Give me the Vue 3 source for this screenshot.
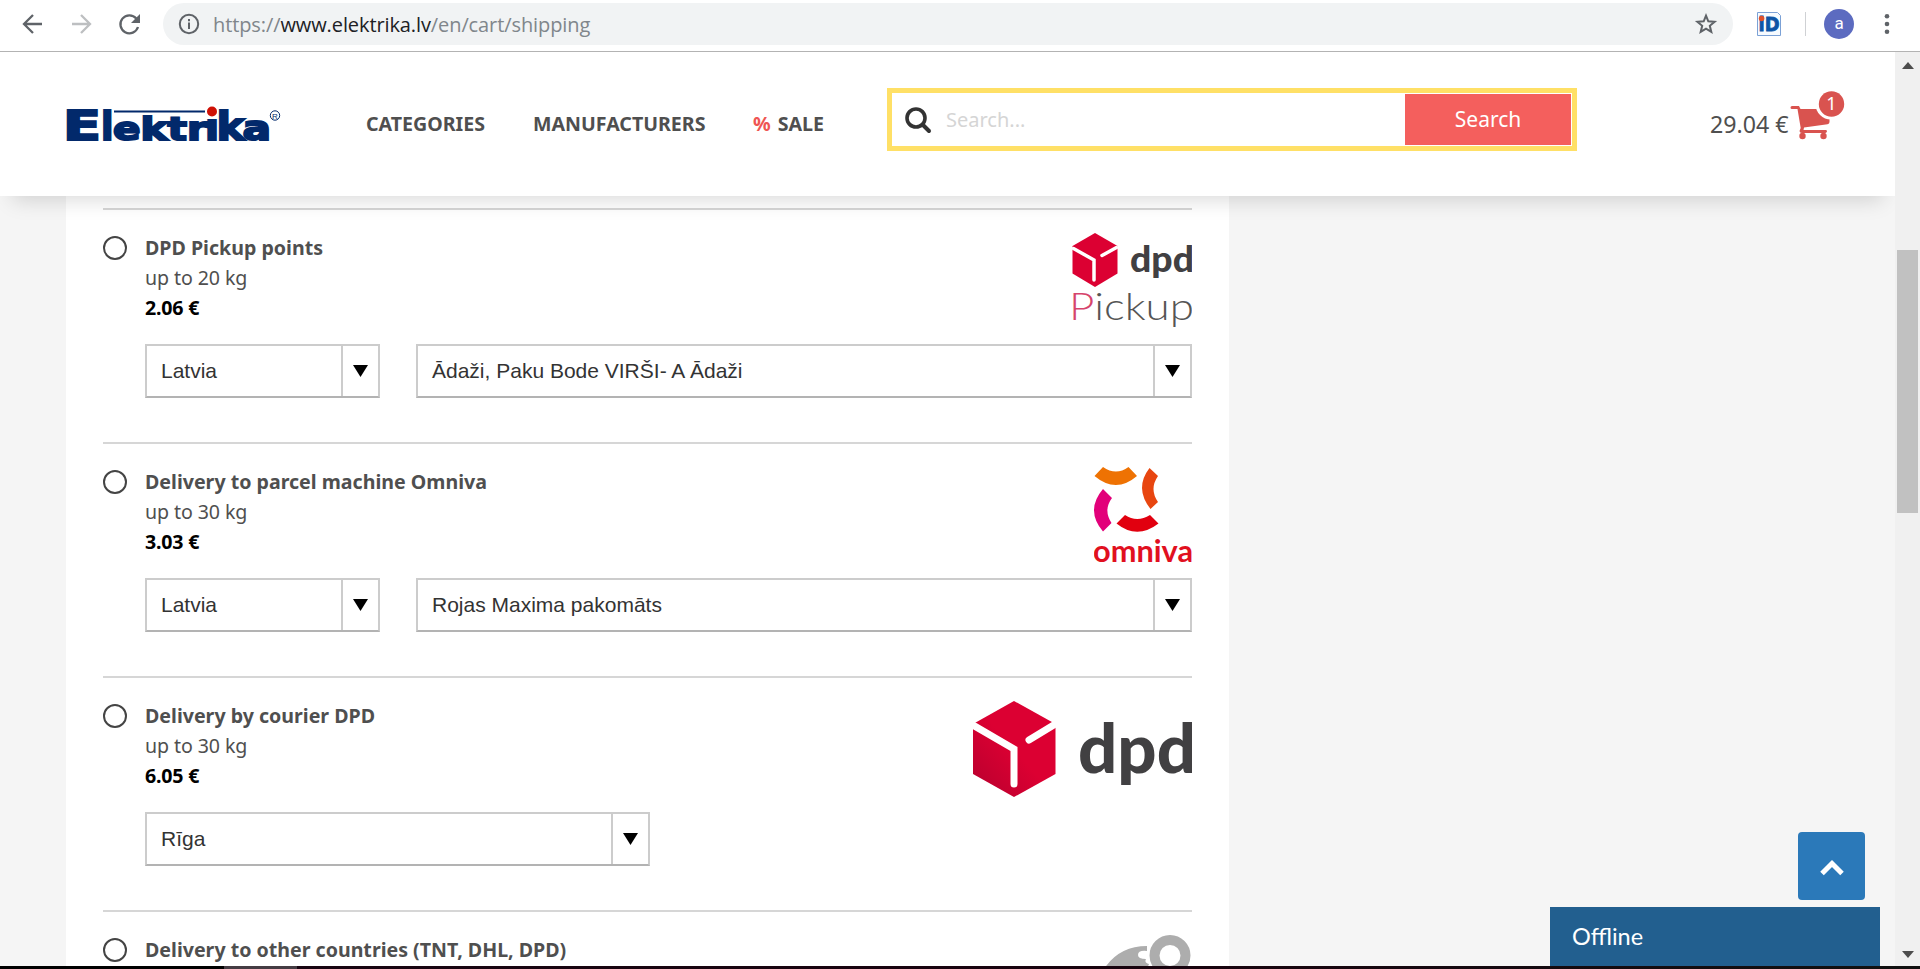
<script setup>
const methods = [
  { id: 'pickup', title: 'DPD Pickup points', limit: 'up to 20 kg', price: '2.06 €', selects: [{ v: 'Latvia', s: 'small' }, { v: 'Ādaži, Paku Bode VIRŠI- A Ādaži', s: 'large' }] },
  { id: 'omniva', title: 'Delivery to parcel machine Omniva', limit: 'up to 30 kg', price: '3.03 €', selects: [{ v: 'Latvia', s: 'small' }, { v: 'Rojas Maxima pakomāts', s: 'large' }] },
  { id: 'dpd', title: 'Delivery by courier DPD', limit: 'up to 30 kg', price: '6.05 €', selects: [{ v: 'Rīga', s: 'medium' }] },
  { id: 'other', title: 'Delivery to other countries (TNT, DHL, DPD)', limit: '', price: '', selects: [] },
]
</script>

<template>
  <div class="window">
    <div class="toolbar">
      <svg class="nav-icons" width="163" height="51" viewBox="0 0 163 51" fill="none" stroke="#5f6368" stroke-width="2.3">
        <path d="M42 24H25M33 15l-9 9 9 9" />
        <path d="M72 24h17M81 15l9 9-9 9" stroke="#bdbfc1" />
        <path d="M136.300 18.500A9 9 0 1 0 138 27" />
        <path d="M140 14v9h-9z" fill="#5f6368" stroke="none" />
      </svg>
      <div class="omnibox">
        <svg class="info" width="22" height="22" viewBox="0 0 22 22" fill="none" stroke="#5f6368" stroke-width="2">
          <circle cx="11" cy="11" r="9.200" /><path d="M11 9.500v6.500M11 6v2.200" />
        </svg>
        <span class="url">https://<b>www.elektrika.lv</b>/en/cart/shipping</span>
        <svg class="star" width="24" height="24" viewBox="0 0 24 24" fill="none" stroke="#5f6368" stroke-width="2">
          <path d="M12 3.600l2.300 5.700 6.300.500-4.800 4 1.500 6.100-5.300-3.300-5.300 3.300 1.500-6.100-4.800-4 6.300-.500z" />
        </svg>
      </div>
      <svg width="187" height="51" viewBox="0 0 187 51">
        <path d="M24.500 12.500h20l3 3v20h-23z" fill="#f7fbff" stroke="#7ba1d6" />
        <text x="25.500" y="31" class="idmark" textLength="21" lengthAdjust="spacingAndGlyphs">iD</text>
        <circle cx="28.600" cy="18.500" r="2.800" fill="#e0502a" />
        <path d="M72.500 12v24" stroke="#cfd1d4" />
        <circle cx="106" cy="24" r="15" fill="#5c6bc0" />
        <text x="106" y="28.500" class="avatar" text-anchor="middle">a</text>
        <g fill="#5f6368"><circle cx="154" cy="16.300" r="2.300" /><circle cx="154" cy="24" r="2.300" /><circle cx="154" cy="31.700" r="2.300" /></g>
      </svg>
    </div>

    <div class="viewport">
      <div class="page">
        <header class="header">
          <svg class="brand" width="216" height="36" viewBox="0 0 216 36">
            <g class="brand-text">
              <text x="-3" y="33.800" font-size="40" textLength="38" lengthAdjust="spacingAndGlyphs">E</text>
              <text x="35" y="33.800" font-size="38.500" textLength="12.500" lengthAdjust="spacingAndGlyphs">l</text>
              <text x="47" y="33.800" font-size="32.500" textLength="94" lengthAdjust="spacingAndGlyphs">ektr</text>
              <text x="139" y="33.800" font-size="35" textLength="14" lengthAdjust="spacingAndGlyphs">ı</text>
              <text x="150.500" y="33.800" font-size="38.500" textLength="28" lengthAdjust="spacingAndGlyphs">k</text>
              <text x="176.500" y="33.800" font-size="34" textLength="28.500" lengthAdjust="spacingAndGlyphs">a</text>
            </g>
            <path d="M48 5.500h91" stroke="#02296b" stroke-width="2.200" />
            <circle cx="146" cy="5.500" r="5" fill="#cf1005" />
            <circle cx="209" cy="9.500" r="4.700" fill="none" stroke="#02296b" />
            <text x="209" y="12.500" text-anchor="middle" class="reg">R</text>
          </svg>
          <nav class="nav">
            <span class="n1">CATEGORIES</span><span class="n2">MANUFACTURERS</span>
            <span class="n3"><i>%</i>SALE</span>
          </nav>
          <div class="search">
            <svg width="30" height="30" viewBox="0 0 30 30" fill="none" stroke="#333" stroke-linecap="round">
              <circle cx="12" cy="13" r="9" stroke-width="3.600" /><path d="M19 20l6 6" stroke-width="4" />
            </svg>
            <span class="placeholder">Search...</span>
            <span class="go">Search</span>
          </div>
          <div class="cart">
            <span class="total">29.04 €</span>
            <svg width="56" height="50" viewBox="0 0 56 50">
              <g fill="#d9534f">
                <path d="M2 15h7l1.500 3H39.500v13q0 2-2 2.300L14 36.500l-.500 2.500h22q1.500 0 1.500 1.300T35.500 42H12q-2.500 0-2.500-2l1.200-3L7.500 18H2q-1.500 0-1.500-1.500T2 15z" />
                <circle cx="12.500" cy="45" r="3.200" /><circle cx="33.500" cy="45" r="3.200" />
              </g>
              <circle cx="41" cy="13" r="15.500" fill="#fff" />
              <circle cx="41.500" cy="13" r="12.700" fill="#d9534f" />
              <text x="41.500" y="19" text-anchor="middle" class="count">1</text>
            </svg>
          </div>
        </header>

        <main class="panel">
          <section v-for="m in methods" :key="m.id" class="method">
            <span class="radio"></span>
            <div class="details">
              <div class="info-row">
                <div class="copy">
                  <div class="title">{{ m.title }}</div>
                  <div class="limit">{{ m.limit }}</div>
                  <div class="price">{{ m.price }}</div>
                </div>
                <svg v-if="m.id === 'pickup'" class="logo" width="120" height="96" viewBox="0 0 120 96">
                  <path d="M23 0L45.500 13v27.500L23 54 .500 40.500V13z" fill="#dc0032" />
                  <path d="M1.500 15.500L22 27v20M44.500 14.500L30 22.500" class="cut" stroke-width="3.500" />
                  <text x="58" y="38.500" font-size="36" textLength="64" lengthAdjust="spacingAndGlyphs" class="dpdtext">dpd</text>
                  <text x="-3" y="87" font-size="37" textLength="125" lengthAdjust="spacingAndGlyphs" class="pickup-text"><tspan fill="#d6446c">P</tspan>ickup</text>
                </svg>
                <svg v-else-if="m.id === 'omniva'" class="logo" width="98" height="96" viewBox="0 0 98 96">
                  <path d="M9 0Q22 9 34.500 0L43 9Q22 27 .500 9z" fill="#ee7203" />
                  <path d="M55.500 1L64 9Q55 22 64 35L56.500 42Q40 21 55.500 1z" fill="#e84610" />
                  <path d="M9 22L18 31Q9 43 17.500 56L9 64.500Q-9 43 9 22z" fill="#e2007a" />
                  <path d="M31 48Q43 56 56 48L64.500 56.500Q43 73 22.500 56.500z" fill="#e1000f" />
                  <text x="-1" y="95" textLength="100" lengthAdjust="spacingAndGlyphs" class="omni">omniva</text>
                </svg>
                <svg v-else-if="m.id === 'dpd'" class="logo" width="219" height="96" viewBox="0 0 219 96">
                  <defs><linearGradient id="cube" x1="0" y1="1" x2=".5" y2=".5"><stop offset="0" stop-color="#b6002e" /><stop offset="1" stop-color="#dc0032" /></linearGradient></defs>
                  <path d="M41 0L82.500 23v50L41 96 0 73V23z" fill="url(#cube)" />
                  <path d="M-2 23L41 48v35M84 22L56 39" class="cut" stroke-width="7" />
                  <text x="105" y="71.500" font-size="68" textLength="118" lengthAdjust="spacingAndGlyphs" class="dpdtext">dpd</text>
                </svg>
                <svg v-else class="logo" width="88" height="96" viewBox="0 0 88 96">
                  <path d="M0 34Q15 11 43 11v5q-9-1-9 4 0 4 8 4-2 4 3 5l-6 15H0z" fill="#adadad" />
                  <circle cx="66" cy="20.500" r="15.500" fill="none" stroke="#adadad" stroke-width="10" />
                </svg>
              </div>
              <div class="selects">
                <div v-for="s in m.selects" :key="s.v" class="select" :class="s.s">
                  <span>{{ s.v }}</span>
                  <div class="arrow"><svg width="15" height="12" viewBox="0 0 15 12"><path d="M0 0h15L7.500 12z" /></svg></div>
                </div>
              </div>
            </div>
          </section>
        </main>
      </div>
      <div class="scrollbar">
        <svg width="12" height="7" viewBox="0 0 12 7"><path d="M6 0l6 7H0z" fill="#4d4d4d" /></svg>
        <div class="thumb"></div>
        <svg width="12" height="7" viewBox="0 0 12 7"><path d="M6 7l6-7H0z" fill="#4d4d4d" /></svg>
      </div>
      <div class="to-top">
        <svg width="24" height="18" viewBox="0 0 24 18" fill="none" stroke="#fff" stroke-width="5"><path d="M2 14.500L12 4.500l10 10" /></svg>
      </div>
      <div class="chat">Offline</div>
    </div>
    <div class="taskbar"></div>
  </div>
</template>

<style>
body { margin: 0; overflow: hidden; }
</style>
<style scoped>
* { box-sizing: border-box; }
svg { display: block; flex: none; overflow: visible; }
.window { width: 1920px; height: 969px; display: flex; flex-direction: column; background: #fff; font-family: "Noto Sans", sans-serif; overflow: hidden; }
.toolbar { height: 52px; flex: none; display: flex; border-bottom: 1px solid #b3b3b3; }
.omnibox { width: 1570px; height: 42px; margin-top: 3px; border-radius: 21px; background: #f1f3f4; display: flex; align-items: center; padding: 0 15px 0 15px; }
.url { font-family: "Open Sans", sans-serif; font-size: 20px; color: #80868b; margin-left: 13px; line-height: 28px; padding-top: 1px; white-space: nowrap; letter-spacing: -.1px; }
.url b { font-weight: 400; color: #202124; }
.star { margin-left: auto; }
.idmark { font: 700 19px "DejaVu Sans", sans-serif; fill: #0d55a5; stroke: #0d55a5; stroke-width: .8px; }
.avatar { font: 17px Roboto, sans-serif; fill: #fff; }
.viewport { height: 914px; display: flex; position: relative; background: #f5f5f5; flex: none; overflow: hidden; }
.page { width: 1895px; overflow: hidden; }
.header { height: 144px; background: #fff; display: flex; position: relative; z-index: 1; box-shadow: 0 16px 20px -12px rgba(0, 0, 0, .15); }
.brand { margin: 54px 0 0 66px; }
.brand-text { font-family: "DejaVu Sans", sans-serif; font-weight: 700; fill: #02296b; stroke: #02296b; stroke-width: 2px; }
.reg { font: 8px "Liberation Sans", sans-serif; fill: #02296b; }
.nav { width: 605px; padding: 58px 0 0 84px; display: flex; font-size: 19.6px; font-weight: 700; color: #4f4f4f; line-height: 28px; white-space: nowrap; }
.nav span { flex: none; }
.n1 { width: 167px; }
.n2 { width: 220px; }
.nav i { font-style: normal; color: #ef5552; margin-right: 7px; }
.search { width: 690px; height: 63px; margin-top: 36px; border: 5px solid #ffe066; display: flex; align-items: center; padding: 1px; flex: none; }
.search svg { margin-left: 11px; }
.placeholder { font-size: 20px; color: #d5d5d5; margin-left: 12px; }
.go { width: 166px; height: 51px; margin-left: auto; background: #f45f5d; color: #fff; font-size: 21px; line-height: 51px; text-align: center; }
.cart { display: flex; margin-left: 133px; }
.total { width: 80px; font-size: 23.2px; color: #4f4f4f; padding-top: 56px; line-height: 32px; white-space: nowrap; }
.cart svg { margin-top: 39px; }
.count { font: 18px "Noto Sans", sans-serif; fill: #fff; }
.panel { width: 1163px; margin-left: 66px; height: 770px; background: #fff; padding: 12px 37px 0; overflow: hidden; }
.method { height: 234px; border-top: 2px solid #d6d6d6; display: flex; width: 1089px; }
.radio { width: 24px; height: 24px; border: 2px solid #444; border-radius: 50%; margin: 26px 18px 0 0; flex: none; }
.details { flex: 1; }
.info-row { display: flex; justify-content: space-between; height: 134px; padding-top: 23px; }
.copy { font-size: 19.6px; line-height: 30px; color: #4f4f4f; white-space: nowrap; }
.title { font-weight: 700; }
.limit { letter-spacing: -.1px; }
.price { color: #000; font-weight: 700; letter-spacing: -.2px; }
.logo { overflow: hidden; }
.selects { display: flex; gap: 36px; }
.select { height: 54px; border: 2px solid #ccc; border-bottom-color: #b3b3b3; display: flex; justify-content: space-between; font: 21px "Liberation Sans", sans-serif; color: #333; line-height: 50px; padding-left: 14px; }
.small { width: 235px; }
.large { width: 776px; }
.medium { width: 505px; }
.arrow { width: 37px; border-left: 2px solid #ccc; display: flex; align-items: center; justify-content: center; }
.cut { fill: none; stroke: #fff; stroke-linecap: round; stroke-linejoin: miter; }
.dpdtext { font-family: Lato, sans-serif; font-weight: 900; fill: #414042; }
.pickup-text { font-family: Lato, sans-serif; font-weight: 300; fill: #555; }
.omni { font: 700 30px Lato, sans-serif; fill: #e1101f; }
.scrollbar { width: 25px; background: #f0f0f0; display: flex; flex-direction: column; align-items: center; padding: 10px 0 8px; }
.thumb { width: 21px; height: 263px; background: #c1c1c1; margin: 181px 0 auto; }
.to-top { position: absolute; left: 1798px; top: 780px; width: 67px; height: 68px; border-radius: 4px; background: #2b79b9; display: flex; align-items: center; justify-content: center; padding-top: 3px; z-index: 2; }
.chat { position: absolute; left: 1550px; top: 855px; width: 330px; height: 59px; background: #225f8f; color: #fff; font: 23.5px/58px Lato, sans-serif; padding-left: 22px; z-index: 2; }
.taskbar { height: 3px; flex: none; background: linear-gradient(90deg, #000 224px, #453c43 224px, #453c43 297px, #180511 297px, #18030e 1200px, #111 1900px); }
</style>
